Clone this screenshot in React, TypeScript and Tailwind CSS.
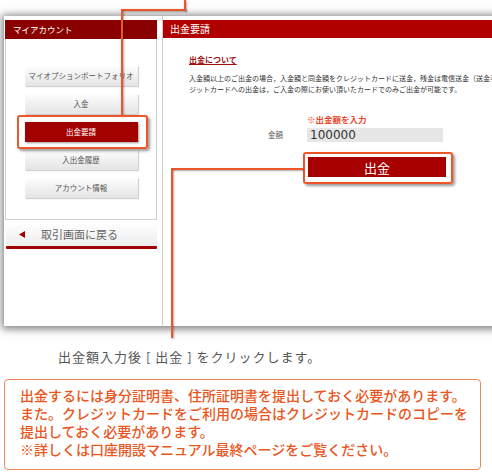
import React from "react";

const OR = "bg-[#f0552a]";

function MenuBtn({ label, active }: { label: string; active?: boolean }) {
  if (active) {
    return (
      <div className="w-[113px] h-[20px] flex items-center justify-center bg-[#a30000] text-white text-[7.5px] leading-none whitespace-nowrap shadow-[1px_1px_2px_rgba(0,0,0,0.4)]">
        {label}
      </div>
    );
  }
  return (
    <div className="w-[113px] h-[20px] flex items-center justify-center bg-linear-to-b from-[#fdfdfd] to-[#e4e4e4] text-[#555] text-[7.5px] leading-none whitespace-nowrap overflow-hidden shadow-[1px_1px_1px_rgba(0,0,0,0.18)]">
      {label}
    </div>
  );
}

export default function App() {
  return (
    <div
      className="relative w-[492px] h-[476px] overflow-hidden bg-white"
      style={{ fontFamily: '"Noto Sans CJK JP", "Noto Sans", sans-serif' }}
    >
      {/* screenshot frame */}
      <div className="ml-[4px] mt-[16px] w-[540px] h-[310px] bg-white flex shadow-[0_1px_8px_2px_rgba(0,0,0,0.5)]">
        {/* left column */}
        <div className="w-[153px] pl-[1px] pt-[4px] flex flex-col">
          <div className="h-[19px] bg-[#8a0000] text-white text-[8.5px] leading-none pl-[8px] flex items-center">
            マイアカウント
          </div>
          <div className="h-[181px] border border-t-0 border-[#cfcfcf] flex flex-col items-center pt-[27px] gap-[8px]">
            <MenuBtn label="マイオプションポートフォリオ" />
            <MenuBtn label="入金" />
            <MenuBtn label="出金要請" active />
            <MenuBtn label="入出金履歴" />
            <MenuBtn label="アカウント情報" />
          </div>
          <div className="mt-[3px] ml-[1px]">
            <div className="h-[23px] bg-linear-to-b from-[#ffffff] to-[#ececec] flex items-center pl-[13px] gap-[16px]">
              <svg width="6" height="7" viewBox="0 0 6 7">
                <polygon points="6,0 6,7 0,3.5" fill="#a00000" />
              </svg>
              <span className="text-[11px] leading-none text-[#666]">取引画面に戻る</span>
            </div>
            <div className="h-[3px] bg-[#a00000] rounded-[1px]" />
          </div>
        </div>

        {/* right panel */}
        <div className="ml-[5px] flex-1 border-l border-[#cccccc] pt-[4px] overflow-hidden">
          <div className="h-[18px] bg-[#b00000] text-white text-[10px] leading-none pl-[7px] flex items-center">
            出金要請
          </div>
          <div className="pl-[26px]">
            <div className="mt-[17px] text-[8px] leading-[10px] font-bold text-[#a01010] underline">
              出金について
            </div>
            <div className="mt-[8px] text-[7px] leading-[11px] text-[#333] whitespace-nowrap">
              <div>入金額以上のご出金の場合，入金額と同金額をクレジットカードに送金，残金は電信送金（送金手数料はお客様負担）となります。クレ</div>
              <div>ジットカードへの出金は，ご入金の際にお使い頂いたカードでのみご出金が可能です。</div>
            </div>
          </div>
          <div className="mt-[18px] pl-[144px] text-[8.5px] leading-[12px] font-bold text-[#e8462a]">
            ※出金額を入力
          </div>
          <div className="mt-[3px] flex items-center">
            <div className="w-[144px] pl-[105px] text-[7.5px] leading-none text-[#555]">金額</div>
            <div
              className="w-[136px] h-[14px] bg-[#e6e6e6] text-[12px] leading-none text-[#333] pl-[3px] flex items-center"
              style={{ fontFamily: '"DejaVu Sans", sans-serif' }}
            >
              100000
            </div>
          </div>
          <div className="mt-[15px] ml-[145px] w-[138px] h-[20px] bg-[#a80000] text-white text-[13px] leading-none flex items-center justify-center">
            出金
          </div>
        </div>
      </div>

      {/* caption */}
      <div className="mt-[22px] pl-[58px] text-[13px] leading-[18px] tracking-[1px] text-[#555] whitespace-nowrap">
        出金額入力後 [ 出金 ] をクリックします。
      </div>

      {/* note */}
      <div className="mt-[13px] ml-[4px] w-[477px] h-[91px] border border-[#f0845c] rounded-[4px] pl-[15px] pt-[6px] text-[14px] leading-[18px] font-medium text-[#ea5520] whitespace-nowrap">
        <div>出金するには身分証明書、住所証明書を提出しておく必要があります。</div>
        <div>また。クレジットカードをご利用の場合はクレジットカードのコピーを</div>
        <div>提出しておく必要があります。</div>
        <div>※詳しくは口座開設マニュアル最終ページをご覧ください。</div>
      </div>

      {/* annotation overlays */}
      <div className={`absolute left-[184px] top-0 w-[2px] h-[11px] ${OR} shadow-[1px_1px_2px_rgba(0,0,0,0.35)]`} />
      <div className={`absolute left-[121px] top-[9px] w-[65px] h-[2px] ${OR} shadow-[1px_1px_2px_rgba(0,0,0,0.35)]`} />
      <div className={`absolute left-[121px] top-[9px] w-[2px] h-[107px] ${OR} shadow-[1px_1px_2px_rgba(0,0,0,0.35)]`} />
      <div className="absolute left-[17px] top-[115px] w-[131px] h-[34px] border-2 border-[#f0552a] rounded-[3px] shadow-[2px_2px_3px_rgba(0,0,0,0.4)]" />

      <div className="absolute left-[303px] top-[152px] w-[150px] h-[32px] border-2 border-[#f0552a] rounded-[3px] shadow-[2px_2px_3px_rgba(0,0,0,0.4)]" />
      <div className={`absolute left-[172px] top-[168px] w-[131px] h-[2px] ${OR} shadow-[1px_1px_2px_rgba(0,0,0,0.35)]`} />
      <div className={`absolute left-[171px] top-[168px] w-[2px] h-[170px] ${OR} shadow-[1px_1px_2px_rgba(0,0,0,0.35)]`} />
    </div>
  );
}
